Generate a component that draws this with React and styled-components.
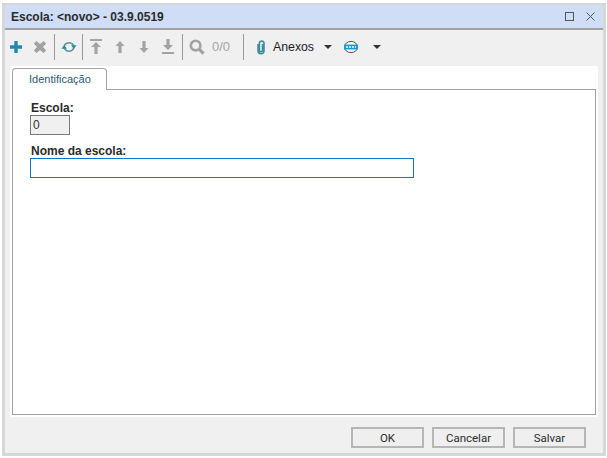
import React from 'react'
import styled, { createGlobalStyle } from 'styled-components'

const GlobalStyle = createGlobalStyle`
  html, body {
    margin: 0;
    background: #fff;
    font-family: 'Liberation Sans', Arial, sans-serif;
  }
  * { box-sizing: border-box; }
`

const Page = styled.div`
  width: 607px;
  height: 458px;
  padding: 3px 2px 2px 2px;
`

const Frame = styled.div`
  width: 604px;
  height: 453px;
  border: 3px solid #d7d7d7;
  border-top-width: 2px;
  background: #f0f0f0;
  display: flex;
  flex-direction: column;
`

const TitleBar = styled.div`
  height: 25px;
  flex: none;
  display: flex;
  align-items: center;
  justify-content: space-between;
  padding: 0 8px 0 6px;
  background: #cfdef6;
  border-bottom: 2px solid #a3a3a3;
`

const Title = styled.span`
  font-size: 12px;
  font-weight: bold;
  color: #2b2b2b;
`

const WindowButtons = styled.div`
  display: flex;
  align-items: center;
  gap: 12px;
`

const Toolbar = styled.div`
  height: 36px;
  flex: none;
  display: flex;
  align-items: center;
  padding-bottom: 3px;
`

const ToolSlot = styled.div`
  width: ${p => p.$w || 24}px;
  height: 24px;
  flex: none;
  margin-left: ${p => p.$left || 0}px;
  display: flex;
  align-items: center;
  justify-content: center;
`

const ToolSep = styled.div`
  width: 1px;
  height: 26px;
  flex: none;
  background: #9a9a9a;
  margin-left: ${p => p.$left || 0}px;
`

const Counter = styled.span`
  font-size: 13px;
  color: #a5a5a5;
  margin-left: 2px;
  width: 18px;
  flex: none;
  white-space: nowrap;
`

const ToolLabel = styled.span`
  font-size: 12.3px;
  color: #1a1a2a;
  margin-left: 1px;
  width: 41px;
  flex: none;
`

const Caret = styled.span`
  width: 0;
  height: 0;
  flex: none;
  border-left: 4px solid transparent;
  border-right: 4px solid transparent;
  border-top: 4px solid #333;
  margin-left: ${p => p.$left}px;
`

const Sheet = styled.div`
  flex: none;
  height: 351px;
  margin: 0 5px;
  padding: 2px;
  background: #fff;
  display: flex;
  flex-direction: column;
`

const TabStrip = styled.div`
  height: 21px;
  flex: none;
  display: flex;
  align-items: flex-start;
`

const Tab = styled.div`
  width: 95px;
  height: 22px;
  padding: 4px 0 0 16px;
  background: #fff;
  border: 1px solid #a3a3a3;
  border-bottom: none;
  border-radius: 4px 4px 0 0;
  font-size: 11px;
  line-height: 13px;
  color: #2a5a76;
  position: relative;
  z-index: 1;
`

const Panel = styled.div`
  flex: 1;
  border: 1px solid #a3a3a3;
  padding: 11px 17px 0;
  display: flex;
  flex-direction: column;
`

const Label = styled.label`
  display: block;
  padding-left: 1px;
  font-size: 12px;
  font-weight: bold;
  color: #2b2b2b;
  line-height: 14px;
`

const CodeField = styled.div`
  width: 40px;
  height: 20px;
  margin-bottom: 9px;
  padding: 2px 0 0 2px;
  border: 1px solid #7a7a7a;
  background: #f0f0f0;
  font-size: 12px;
  line-height: 14px;
  color: #333;
`

const NameField = styled.input`
  display: block;
  width: 384px;
  height: 20px;
  margin: 0;
  padding: 0 2px;
  border: 1px solid #0a78d0;
  background: #fff;
  outline: none;
`

const Footer = styled.div`
  flex: 1;
  display: flex;
  justify-content: flex-end;
  align-items: flex-start;
  gap: 8px;
  padding: 10px 17px 0 0;
`

const FooterButton = styled.button`
  width: 73px;
  height: 21px;
  padding: 0;
  border: 2px solid #b6b6b6;
  background: #efefef;
  font-family: Roboto, sans-serif;
  font-size: 11.5px;
  color: #2b2b2b;
`

const Icon = ({ size = 16, children }) => (
  <svg width={size} height={size} viewBox="0 0 16 16" fill="none">{children}</svg>
)

const Grey = '#a3a3a3'
const Teal = '#1f93b5'

const ArrowUp = () => (
  <Icon><path d="M8 2 12.5 7 9.6 7V14H6.4V7L3.5 7Z" fill={Grey} /></Icon>
)
const ArrowDown = () => (
  <Icon><path d="M6.4 2H9.6V9L12.5 9 8 14 3.5 9 6.4 9Z" fill={Grey} /></Icon>
)
const ArrowFirst = () => (
  <Icon>
    <path d="M2 0H14V2H2Z" fill={Grey} />
    <path d="M8 3 13 8H9.6V15H6.4V8H3Z" fill={Grey} />
  </Icon>
)
const ArrowLast = () => (
  <Icon>
    <path d="M6.4 0H9.6V6H13L8 11 3 6H6.4Z" fill={Grey} />
    <path d="M2 13H14V15H2Z" fill={Grey} />
  </Icon>
)

export default function App () {
  return (
    <Page>
      <GlobalStyle />
      <Frame>
        <TitleBar>
          <Title>Escola: &lt;novo&gt; - 03.9.0519</Title>
          <WindowButtons>
            <svg width="9" height="9" viewBox="0 0 9 9" fill="none">
              <rect x="0.5" y="0.5" width="8" height="8" stroke="#555" />
            </svg>
            <svg width="9" height="9" viewBox="0 0 9 9" fill="none">
              <path d="M.5 .5 8.5 8.5M8.5 .5 .5 8.5" stroke="#555" />
            </svg>
          </WindowButtons>
        </TitleBar>
        <Toolbar>
          <ToolSlot $w={21}>
            <Icon><path d="M6.3 2H9.7V6.3H14V9.7H9.7V14H6.3V9.7H2V6.3H6.3Z" fill="#1f89b5" /></Icon>
          </ToolSlot>
          <ToolSlot $w={28}>
            <Icon><path d="M4.5 2 8 5 11.5 2 14.2 4.5 11 8 14.2 11.5 11.5 14 8 11 4.5 14 1.8 11.5 5 8 1.8 4.5Z" fill={Grey} /></Icon>
          </ToolSlot>
          <ToolSep />
          <ToolSlot $w={27}>
            <Icon>
              <path d="M3.2 7A5.2 5.2 0 0 1 12.8 7" stroke="#64909c" strokeWidth="1.6" />
              <path d="M12.8 9A5.2 5.2 0 0 1 3.2 9" stroke="#64909c" strokeWidth="1.6" />
              <path d="M10 6.2H15.6L12.8 10Z" fill={Teal} />
              <path d="M.4 9.8H6L3.2 6Z" fill={Teal} />
            </Icon>
          </ToolSlot>
          <ToolSep />
          <ToolSlot $w={25}><ArrowFirst /></ToolSlot>
          <ToolSlot><ArrowUp /></ToolSlot>
          <ToolSlot><ArrowDown /></ToolSlot>
          <ToolSlot><ArrowLast /></ToolSlot>
          <ToolSep $left={2} />
          <ToolSlot $w={27}>
            <Icon>
              <circle cx="6.6" cy="6.6" r="4.8" stroke={Grey} strokeWidth="2.6" />
              <path d="M10.2 10.2 14.6 14.6" stroke={Grey} strokeWidth="3.2" />
            </Icon>
          </ToolSlot>
          <Counter>0/0</Counter>
          <ToolSep $left={13} />
          <ToolSlot $w={22} $left={6}>
            <Icon>
              <path d="M5 5V11.8A3 3 0 0 0 11 11.8V3.8A2.4 2.4 0 0 0 6.4 3.8V11.2A1.5 1.5 0 0 0 9.5 11.2V5" stroke="#3c8e9f" strokeWidth="1.6" />
            </Icon>
          </ToolSlot>
          <ToolLabel>Anexos</ToolLabel>
          <Caret $left={10} />
          <ToolSlot $w={20} $left={9}>
            <Icon>
              <ellipse cx="8" cy="8" rx="6.6" ry="5.6" fill="#f2f6f8" stroke="#555" />
              <path d="M1 5.6H15V10.4H1Z" fill="#189ad2" />
              <path d="M3 8H13" stroke="#fff" strokeWidth="1.4" strokeDasharray="2 1" />
            </Icon>
          </ToolSlot>
          <Caret $left={12} />
        </Toolbar>
        <Sheet>
          <TabStrip><Tab>Identificação</Tab></TabStrip>
          <Panel>
            <Label>Escola:</Label>
            <CodeField>0</CodeField>
            <Label>Nome da escola:</Label>
            <NameField />
          </Panel>
        </Sheet>
        <Footer>
          <FooterButton>OK</FooterButton>
          <FooterButton>Cancelar</FooterButton>
          <FooterButton>Salvar</FooterButton>
        </Footer>
      </Frame>
    </Page>
  )
}
